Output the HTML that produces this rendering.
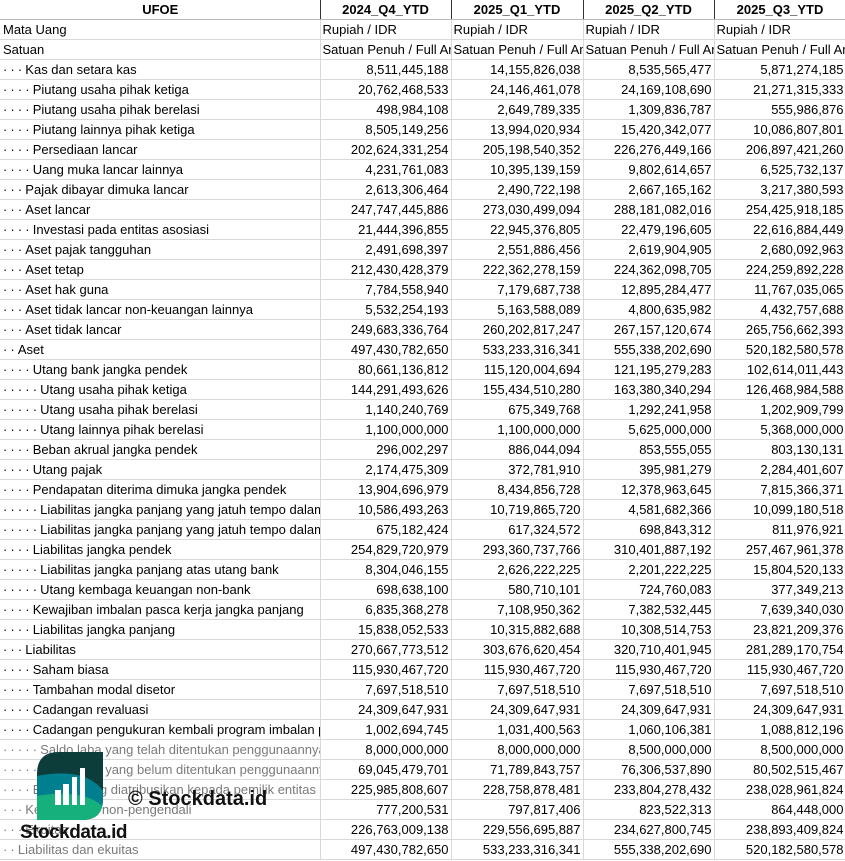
<!DOCTYPE html>
<html><head><meta charset="utf-8"><style>
body{margin:0;background:#fff;width:845px;height:861px;overflow:hidden;position:relative;font-family:"Liberation Sans",Arial,sans-serif;font-size:13px;color:#000}
table{border-collapse:collapse;table-layout:fixed;position:absolute;left:0;top:0;width:846px}
td{height:19px;padding:0 2px;border-bottom:1px solid #d9d9d9;border-right:1px solid #d9d9d9;white-space:nowrap;overflow:hidden;text-overflow:clip;text-align:right;line-height:19px}
td:first-child{text-align:left;padding-left:3px}
tr.h td{font-weight:bold;text-align:center;border-right:1px solid #333;border-bottom:1px solid #bbb}
tr.h td:last-child{border-right:1px solid #d9d9d9}
tr.l td{text-align:left}
.d{letter-spacing:3.1px}
.f td{color:#7a7a7a}
.f td:nth-child(n+2){color:#000}
</style></head><body>
<table>
<colgroup><col style="width:320px"><col style="width:131px"><col style="width:132px"><col style="width:131px"><col style="width:132px"></colgroup>
<tr class="h"><td style="text-align:center">UFOE</td><td>2024_Q4_YTD</td><td>2025_Q1_YTD</td><td>2025_Q2_YTD</td><td>2025_Q3_YTD</td></tr>
<tr class="l"><td>Mata Uang</td><td>Rupiah / IDR</td><td>Rupiah / IDR</td><td>Rupiah / IDR</td><td>Rupiah / IDR</td></tr>
<tr class="l"><td>Satuan</td><td>Satuan Penuh / Full Amount</td><td>Satuan Penuh / Full Amount</td><td>Satuan Penuh / Full Amount</td><td>Satuan Penuh / Full Amount</td></tr>
<tr><td><span class="d">···</span>Kas dan setara kas</td><td>8,511,445,188</td><td>14,155,826,038</td><td>8,535,565,477</td><td>5,871,274,185</td></tr>
<tr><td><span class="d">····</span>Piutang usaha pihak ketiga</td><td>20,762,468,533</td><td>24,146,461,078</td><td>24,169,108,690</td><td>21,271,315,333</td></tr>
<tr><td><span class="d">····</span>Piutang usaha pihak berelasi</td><td>498,984,108</td><td>2,649,789,335</td><td>1,309,836,787</td><td>555,986,876</td></tr>
<tr><td><span class="d">····</span>Piutang lainnya pihak ketiga</td><td>8,505,149,256</td><td>13,994,020,934</td><td>15,420,342,077</td><td>10,086,807,801</td></tr>
<tr><td><span class="d">····</span>Persediaan lancar</td><td>202,624,331,254</td><td>205,198,540,352</td><td>226,276,449,166</td><td>206,897,421,260</td></tr>
<tr><td><span class="d">····</span>Uang muka lancar lainnya</td><td>4,231,761,083</td><td>10,395,139,159</td><td>9,802,614,657</td><td>6,525,732,137</td></tr>
<tr><td><span class="d">···</span>Pajak dibayar dimuka lancar</td><td>2,613,306,464</td><td>2,490,722,198</td><td>2,667,165,162</td><td>3,217,380,593</td></tr>
<tr><td><span class="d">···</span>Aset lancar</td><td>247,747,445,886</td><td>273,030,499,094</td><td>288,181,082,016</td><td>254,425,918,185</td></tr>
<tr><td><span class="d">····</span>Investasi pada entitas asosiasi</td><td>21,444,396,855</td><td>22,945,376,805</td><td>22,479,196,605</td><td>22,616,884,449</td></tr>
<tr><td><span class="d">···</span>Aset pajak tangguhan</td><td>2,491,698,397</td><td>2,551,886,456</td><td>2,619,904,905</td><td>2,680,092,963</td></tr>
<tr><td><span class="d">···</span>Aset tetap</td><td>212,430,428,379</td><td>222,362,278,159</td><td>224,362,098,705</td><td>224,259,892,228</td></tr>
<tr><td><span class="d">···</span>Aset hak guna</td><td>7,784,558,940</td><td>7,179,687,738</td><td>12,895,284,477</td><td>11,767,035,065</td></tr>
<tr><td><span class="d">···</span>Aset tidak lancar non-keuangan lainnya</td><td>5,532,254,193</td><td>5,163,588,089</td><td>4,800,635,982</td><td>4,432,757,688</td></tr>
<tr><td><span class="d">···</span>Aset tidak lancar</td><td>249,683,336,764</td><td>260,202,817,247</td><td>267,157,120,674</td><td>265,756,662,393</td></tr>
<tr><td><span class="d">··</span>Aset</td><td>497,430,782,650</td><td>533,233,316,341</td><td>555,338,202,690</td><td>520,182,580,578</td></tr>
<tr><td><span class="d">····</span>Utang bank jangka pendek</td><td>80,661,136,812</td><td>115,120,004,694</td><td>121,195,279,283</td><td>102,614,011,443</td></tr>
<tr><td><span class="d">·····</span>Utang usaha pihak ketiga</td><td>144,291,493,626</td><td>155,434,510,280</td><td>163,380,340,294</td><td>126,468,984,588</td></tr>
<tr><td><span class="d">·····</span>Utang usaha pihak berelasi</td><td>1,140,240,769</td><td>675,349,768</td><td>1,292,241,958</td><td>1,202,909,799</td></tr>
<tr><td><span class="d">·····</span>Utang lainnya pihak berelasi</td><td>1,100,000,000</td><td>1,100,000,000</td><td>5,625,000,000</td><td>5,368,000,000</td></tr>
<tr><td><span class="d">····</span>Beban akrual jangka pendek</td><td>296,002,297</td><td>886,044,094</td><td>853,555,055</td><td>803,130,131</td></tr>
<tr><td><span class="d">····</span>Utang pajak</td><td>2,174,475,309</td><td>372,781,910</td><td>395,981,279</td><td>2,284,401,607</td></tr>
<tr><td><span class="d">····</span>Pendapatan diterima dimuka jangka pendek</td><td>13,904,696,979</td><td>8,434,856,728</td><td>12,378,963,645</td><td>7,815,366,371</td></tr>
<tr><td><span class="d">·····</span>Liabilitas jangka panjang yang jatuh tempo dalam satu tahun</td><td>10,586,493,263</td><td>10,719,865,720</td><td>4,581,682,366</td><td>10,099,180,518</td></tr>
<tr><td><span class="d">·····</span>Liabilitas jangka panjang yang jatuh tempo dalam satu tahun</td><td>675,182,424</td><td>617,324,572</td><td>698,843,312</td><td>811,976,921</td></tr>
<tr><td><span class="d">····</span>Liabilitas jangka pendek</td><td>254,829,720,979</td><td>293,360,737,766</td><td>310,401,887,192</td><td>257,467,961,378</td></tr>
<tr><td><span class="d">·····</span>Liabilitas jangka panjang atas utang bank</td><td>8,304,046,155</td><td>2,626,222,225</td><td>2,201,222,225</td><td>15,804,520,133</td></tr>
<tr><td><span class="d">·····</span>Utang kembaga keuangan non-bank</td><td>698,638,100</td><td>580,710,101</td><td>724,760,083</td><td>377,349,213</td></tr>
<tr><td><span class="d">····</span>Kewajiban imbalan pasca kerja jangka panjang</td><td>6,835,368,278</td><td>7,108,950,362</td><td>7,382,532,445</td><td>7,639,340,030</td></tr>
<tr><td><span class="d">····</span>Liabilitas jangka panjang</td><td>15,838,052,533</td><td>10,315,882,688</td><td>10,308,514,753</td><td>23,821,209,376</td></tr>
<tr><td><span class="d">···</span>Liabilitas</td><td>270,667,773,512</td><td>303,676,620,454</td><td>320,710,401,945</td><td>281,289,170,754</td></tr>
<tr><td><span class="d">····</span>Saham biasa</td><td>115,930,467,720</td><td>115,930,467,720</td><td>115,930,467,720</td><td>115,930,467,720</td></tr>
<tr><td><span class="d">····</span>Tambahan modal disetor</td><td>7,697,518,510</td><td>7,697,518,510</td><td>7,697,518,510</td><td>7,697,518,510</td></tr>
<tr><td><span class="d">····</span>Cadangan revaluasi</td><td>24,309,647,931</td><td>24,309,647,931</td><td>24,309,647,931</td><td>24,309,647,931</td></tr>
<tr><td><span class="d">····</span>Cadangan pengukuran kembali program imbalan pasti</td><td>1,002,694,745</td><td>1,031,400,563</td><td>1,060,106,381</td><td>1,088,812,196</td></tr>
<tr class="f"><td><span class="d">·····</span>Saldo laba yang telah ditentukan penggunaannya</td><td>8,000,000,000</td><td>8,000,000,000</td><td>8,500,000,000</td><td>8,500,000,000</td></tr>
<tr class="f"><td><span class="d">·····</span>Saldo laba yang belum ditentukan penggunaannya</td><td>69,045,479,701</td><td>71,789,843,757</td><td>76,306,537,890</td><td>80,502,515,467</td></tr>
<tr class="f"><td><span class="d">····</span>Ekuitas yang diatribusikan kepada pemilik entitas induk</td><td>225,985,808,607</td><td>228,758,878,481</td><td>233,804,278,432</td><td>238,028,961,824</td></tr>
<tr class="f"><td><span class="d">···</span>Kepentingan non-pengendali</td><td>777,200,531</td><td>797,817,406</td><td>823,522,313</td><td>864,448,000</td></tr>
<tr class="f"><td><span class="d">···</span>Ekuitas</td><td>226,763,009,138</td><td>229,556,695,887</td><td>234,627,800,745</td><td>238,893,409,824</td></tr>
<tr class="f"><td><span class="d">··</span>Liabilitas dan ekuitas</td><td>497,430,782,650</td><td>533,233,316,341</td><td>555,338,202,690</td><td>520,182,580,578</td></tr>
</table>
<svg style="position:absolute;left:37px;top:752px" width="67" height="69" viewBox="0 0 67 69">
<defs><clipPath id="c"><path d="M22 0H66V47Q66 68 45 68H0V22Q0 0 22 0Z"/></clipPath></defs>
<g clip-path="url(#c)">
<rect width="67" height="69" fill="#0c3d3b"/>
<path d="M0 24Q30 18 50 26Q62 32 67 40V69H0Z" fill="#00808e"/>
<path d="M0 44Q20 40 40 43Q58 46 67 56V69H0Z" fill="#16b07d"/>
<rect x="18" y="38" width="6" height="15" fill="#fff"/>
<rect x="26" y="32" width="6" height="21" fill="#fff"/>
<rect x="35" y="25" width="5" height="28" fill="#fff"/>
<rect x="43" y="16" width="5" height="37" fill="#fff"/>
</g></svg>
<div style="position:absolute;left:128px;top:788px;font-size:20px;font-weight:bold;color:#111">© Stockdata.id</div>
<div style="position:absolute;left:20px;top:822px;font-size:19px;font-weight:bold;color:#111;letter-spacing:-0.5px">Stockdata.id</div>
</body></html>
